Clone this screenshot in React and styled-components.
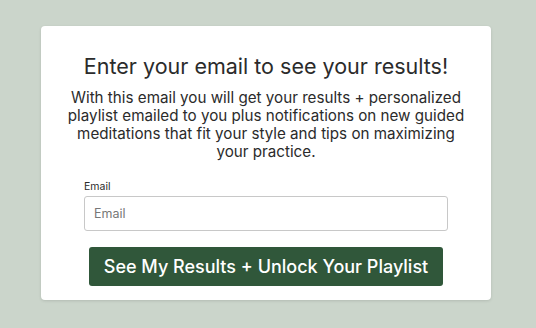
import React from 'react';
import styled, { createGlobalStyle } from 'styled-components';

const GlobalStyle = createGlobalStyle`
  html, body {
    margin: 0;
    padding: 0;
    background: #cbd5cb;
    font-family: Inter, "Noto Sans", sans-serif;
  }
`;

const Page = styled.div`
  width: 536px;
  height: 328px;
  box-sizing: border-box;
  padding: 26px 45px 28px 41px;
`;

const Card = styled.div`
  background: #fff;
  border-radius: 4px;
  box-shadow: 0 1px 3px rgba(0, 0, 0, 0.12);
  height: 274px;
  box-sizing: border-box;
  padding: 26px 20px 0;
  display: flex;
  flex-direction: column;
  align-items: center;
  color: #2b2b2b;
`;

const Title = styled.h1`
  margin: 0;
  font-size: 21.5px;
  font-weight: 400;
  line-height: 28px;
  text-align: center;
`;

const Blurb = styled.p`
  margin: 9px 0 0;
  font-size: 15.2px;
  line-height: 18px;
  text-align: center;
`;

const Field = styled.div`
  width: 364px;
  margin-top: 19px;
  display: flex;
  flex-direction: column;
`;

const Label = styled.label`
  font-size: 10.5px;
  line-height: 13px;
  margin-bottom: 3px;
`;

const Input = styled.input`
  height: 35px;
  box-sizing: border-box;
  border: 1px solid #c8c8c8;
  border-radius: 3px;
  padding: 0 9px;
  font-family: inherit;
  font-size: 12.5px;
  color: #333;

  &::placeholder { color: #777; }
`;

const Button = styled.button`
  margin-top: 16px;
  width: 354px;
  height: 39px;
  border: none;
  border-radius: 3px;
  background: #30573a;
  color: #fff;
  font-family: inherit;
  font-size: 18px;
  font-weight: 500;
  cursor: pointer;
`;

export default function App() {
  return (
    <Page>
      <GlobalStyle />
      <Card>
        <Title>Enter your email to see your results!</Title>
        <Blurb>
          With this email you will get your results + personalized
          <br />
          playlist emailed to you plus notifications on new guided
          <br />
          meditations that fit your style and tips on maximizing
          <br />
          your practice.
        </Blurb>
        <Field>
          <Label htmlFor="email">Email</Label>
          <Input id="email" type="email" placeholder="Email" />
        </Field>
        <Button type="button">See My Results + Unlock Your Playlist</Button>
      </Card>
    </Page>
  );
}
